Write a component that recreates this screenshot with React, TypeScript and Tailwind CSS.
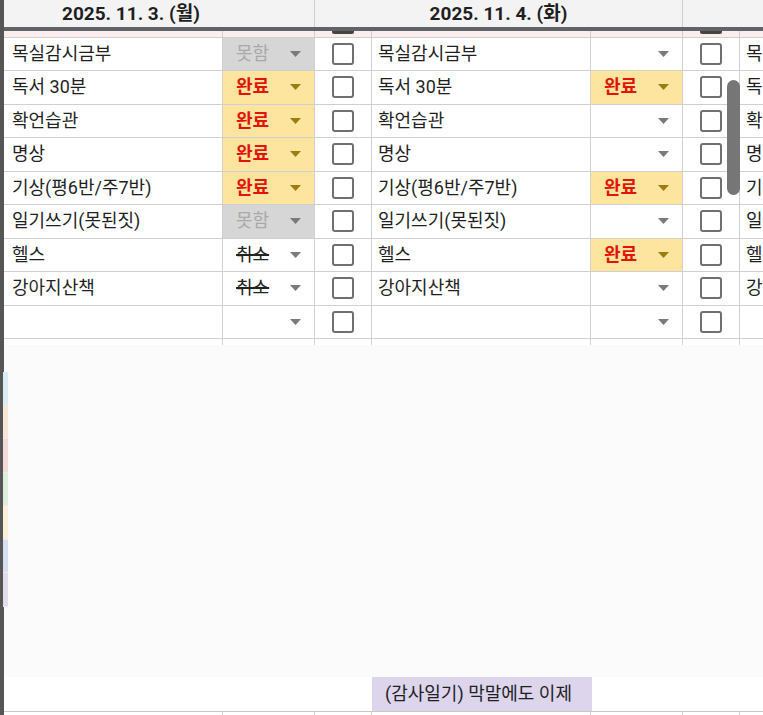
import React from 'react';

type Status = '' | '완료' | '못함' | '취소';

const day1: [string, Status][] = [
  ['목실감시금부', '못함'],
  ['독서 30분', '완료'],
  ['확언습관', '완료'],
  ['명상', '완료'],
  ['기상(평6반/주7반)', '완료'],
  ['일기쓰기(못된짓)', '못함'],
  ['헬스', '취소'],
  ['강아지산책', '취소'],
  ['', ''],
];

const day2: [string, Status][] = [
  ['목실감시금부', ''],
  ['독서 30분', '완료'],
  ['확언습관', ''],
  ['명상', ''],
  ['기상(평6반/주7반)', '완료'],
  ['일기쓰기(못된짓)', ''],
  ['헬스', '완료'],
  ['강아지산책', ''],
  ['', ''],
];

const strips = ['bg-[#dcecf3]', 'bg-[#f8e6d6]', 'bg-[#f3dada]', 'bg-[#deeedd]', 'bg-[#fbf1d6]', 'bg-[#d6def1]', 'bg-[#e3dcea]'];

const Arrow = ({ gold }: { gold?: boolean }) => (
  <svg width="11" height="6" viewBox="0 0 11 6" className="shrink-0">
    <path d="M0 0 L11 0 L5.5 6 Z" fill={gold ? '#9b7d12' : '#7a7a7a'} />
  </svg>
);

const StatusCell = ({ s }: { s: Status }) => {
  const bg = s === '완료' ? 'bg-[#fde59f]' : s === '못함' ? 'bg-[#d6d6d6]' : 'bg-white';
  return (
    <div className={`w-[92px] h-full flex items-center justify-between pl-[13px] pr-[13px] border-r border-[#d0d0d0] ${bg}`}>
      {s === '완료' && <span className="font-bold text-[#e3140c]">완료</span>}
      {s === '못함' && <span className="text-[#a9a9a9]">못함</span>}
      {s === '취소' && <span className="line-through decoration-[1.5px] text-[#222]">취소</span>}
      {s === '' && <span />}
      <Arrow gold={s === '완료'} />
    </div>
  );
};

const Check = () => (
  <div className="w-[57px] h-full flex items-center justify-center border-r border-[#d0d0d0]">
    <div className="w-[22px] h-[22px] rounded-[3px] border-2 border-[#707070] bg-white" />
  </div>
);

const Ticks = () => (
  <div className="flex h-full">
    <div className="w-[219px] border-r border-[#d0d0d0]" />
    <div className="w-[92px] border-r border-[#d0d0d0]" />
    <div className="w-[57px] border-r border-[#d0d0d0]" />
    <div className="w-[219px] border-r border-[#d0d0d0]" />
    <div className="w-[92px] border-r border-[#d0d0d0]" />
    <div className="w-[57px] border-r border-[#d0d0d0]" />
  </div>
);

export default function App() {
  return (
    <div className="w-[763px] h-[715px] overflow-hidden flex bg-white relative text-[18px] text-[#1f1f1f] font-['Roboto','Noto_Sans_CJK_KR',sans-serif]">
      <div className="w-[4px] shrink-0 bg-[#555555]" />
      <div className="flex-1 flex flex-col min-w-0">
        {/* header */}
        <div className="h-[27px] shrink-0 flex bg-[#f3f3f3] font-bold text-[19px] leading-none">
          <div className="w-[311px] border-r border-[#cfcfcf] flex items-center pl-[58px] whitespace-nowrap">2025. 11. 3. (월)</div>
          <div className="w-[368px] border-r border-[#cfcfcf] flex items-center justify-center whitespace-nowrap">2025. 11. 4. (화)</div>
          <div className="flex-1" />
        </div>
        <div className="h-[4px] shrink-0 bg-[#626366]" />
        <div className="h-[6.5px] shrink-0 bg-[#fbeeee] border-b border-[#d0d0d0] flex">
          <div className="w-[219px] border-r border-[#d0d0d0]" />
          <div className="w-[92px] border-r border-[#d0d0d0]" />
          <div className="w-[57px] border-r border-[#d0d0d0] flex justify-center">
            <div className="w-[22px] h-[3px] bg-[#444] rounded-b-[2px]" />
          </div>
          <div className="w-[219px] border-r border-[#d0d0d0]" />
          <div className="w-[92px] border-r border-[#d0d0d0]" />
          <div className="w-[57px] border-r border-[#d0d0d0] flex justify-center">
            <div className="w-[22px] h-[3px] bg-[#444] rounded-b-[2px]" />
          </div>
        </div>

        {day1.map((r, i) => (
          <div key={i} className="h-[33.5px] shrink-0 flex border-b border-[#d0d0d0] leading-none">
            <div className="w-[219px] h-full flex items-center pl-[8px] border-r border-[#d0d0d0] whitespace-nowrap">{r[0]}</div>
            <StatusCell s={r[1]} />
            <Check />
            <div className="w-[219px] h-full flex items-center pl-[6px] border-r border-[#d0d0d0] whitespace-nowrap">{day2[i][0]}</div>
            <StatusCell s={day2[i][1]} />
            <Check />
            <div className="flex-1 h-full flex items-center pl-[6px] overflow-hidden whitespace-nowrap">{day2[i][0].slice(0, 1)}</div>
          </div>
        ))}

        <div className="h-[6px] shrink-0 bg-white">
          <Ticks />
        </div>

        {/* blank overlay area */}
        <div className="flex-1 bg-[#fbfbfb] relative">
          <div className="absolute left-[-1px] top-[27px] w-[5px] flex flex-col">
            {strips.map((c) => (
              <div key={c} className={`h-[33.5px] ${c} border-b border-[#ececec]`} />
            ))}
          </div>
        </div>

        {/* bottom row */}
        <div className="h-[35px] shrink-0 flex bg-white border-b border-[#c8c8c8]">
          <div className="w-[368px]" />
          <div className="w-[220px] bg-[#dcd5ec] flex items-center pl-[13px] leading-none whitespace-nowrap">(감사일기) 막말에도 이제</div>
        </div>
        <div className="h-[3px] shrink-0 bg-white">
          <Ticks />
        </div>
      </div>

      {/* scrollbar thumb */}
      <div className="absolute left-[727px] top-[80px] w-[13px] h-[115px] rounded-full bg-[#767676]" />
    </div>
  );
}
